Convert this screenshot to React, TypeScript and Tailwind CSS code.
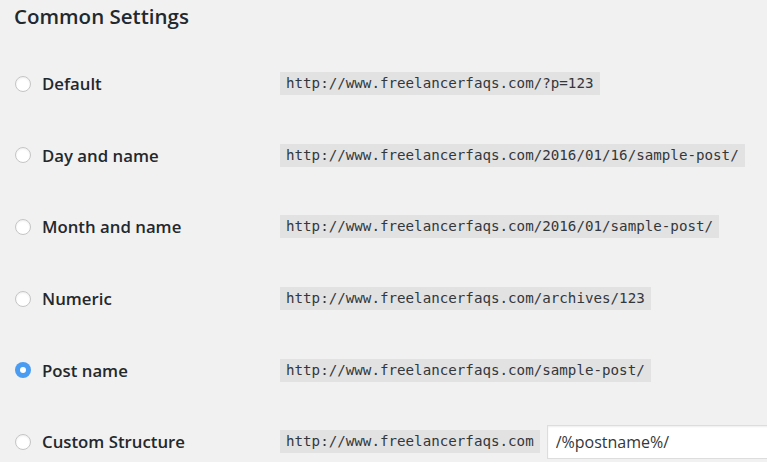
import { useState } from 'react';

const options = [
  { id: 'default', label: 'Default', code: 'http://www.freelancerfaqs.com/?p=123' },
  { id: 'day', label: 'Day and name', code: 'http://www.freelancerfaqs.com/2016/01/16/sample-post/' },
  { id: 'month', label: 'Month and name', code: 'http://www.freelancerfaqs.com/2016/01/sample-post/' },
  { id: 'numeric', label: 'Numeric', code: 'http://www.freelancerfaqs.com/archives/123' },
  { id: 'postname', label: 'Post name', code: 'http://www.freelancerfaqs.com/sample-post/' },
  { id: 'custom', label: 'Custom Structure', code: 'http://www.freelancerfaqs.com' },
];

function Radio({ checked }: { checked: boolean }) {
  if (checked) {
    return (
      <span className="flex h-4 w-4 shrink-0 items-center justify-center rounded-full bg-[#4a9cf2]">
        <span className="h-[6px] w-[6px] rounded-full bg-white" />
      </span>
    );
  }
  return (
    <span className="h-4 w-4 shrink-0 rounded-full border border-[#c5c5c5] bg-white shadow-[inset_0_1px_2px_rgba(0,0,0,0.07)]" />
  );
}

export default function App() {
  const [selected, setSelected] = useState('postname');
  const [custom, setCustom] = useState('/%postname%/');

  return (
    <div className="h-[462px] w-[767px] overflow-hidden bg-[#f1f1f1] pl-[14px] text-[#23282d] font-['Open_Sans',sans-serif]">
      <h2 className="pt-[2px] text-[20.5px] leading-[28px] font-semibold">Common Settings</h2>
      <div className="mt-[18px] flex flex-col">
        {options.map((opt) => (
          <div key={opt.id} className="flex h-[71.6px] items-center">
            <label
              className="flex w-[266px] shrink-0 cursor-pointer items-center gap-[11px] pl-[1px]"
              onClick={() => setSelected(opt.id)}
            >
              <Radio checked={selected === opt.id} />
              <span className="text-[16.8px] font-semibold">{opt.label}</span>
            </label>
            <code className="shrink-0 bg-[#e2e2e2] px-[6px] py-[2px] text-[14.2px] leading-[19px] text-[#32373c] font-['DejaVu_Sans_Mono',monospace]">
              {opt.code}
            </code>
            {opt.id === 'custom' && (
              <input
                value={custom}
                onChange={(e) => setCustom(e.target.value)}
                className="ml-[7px] h-[34px] w-[240px] shrink-0 border border-[#dddddd] bg-white px-[8px] text-[16px] text-[#32373c] outline-none shadow-[inset_0_1px_2px_rgba(0,0,0,0.07)]"
              />
            )}
          </div>
        ))}
      </div>
    </div>
  );
}
